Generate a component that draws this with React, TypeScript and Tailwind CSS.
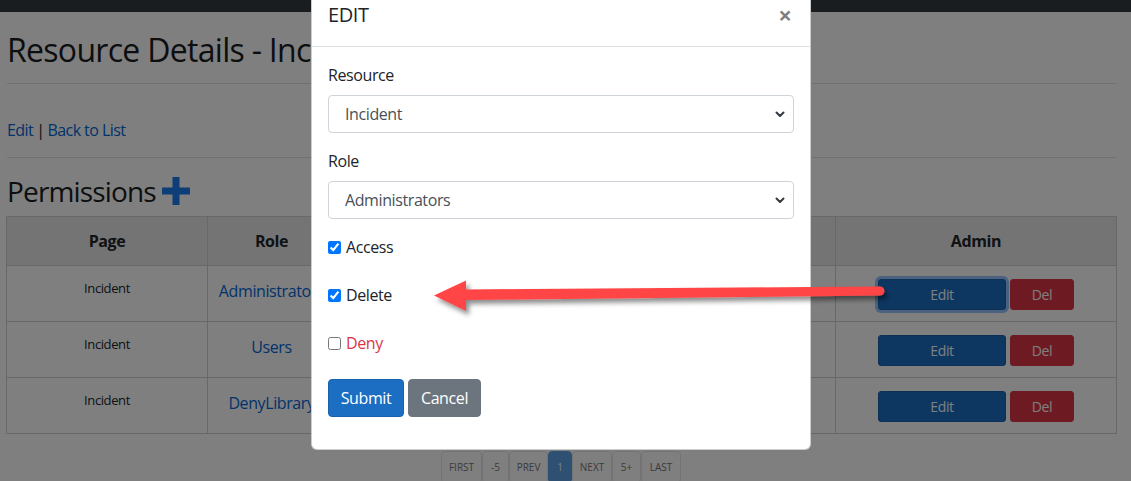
import React from "react";

function Chevron() {
  return (
    <svg
      className="absolute right-[9px] top-1/2 -translate-y-1/2"
      width="10"
      height="8"
      viewBox="0 0 10 8"
      fill="none"
    >
      <path d="M1.5 2.5 L5 6 L8.5 2.5" stroke="#343a40" strokeWidth="2" strokeLinecap="round" strokeLinejoin="round" />
    </svg>
  );
}

function Select({ value }: { value: string }) {
  return (
    <div className="relative">
      <select
        defaultValue={value}
        className="block w-full h-[38px] appearance-none border border-[#ced4da] rounded-[4px] bg-white pl-4 pr-8 text-[16px] text-[#495057] outline-none"
      >
        <option>{value}</option>
      </select>
      <Chevron />
    </div>
  );
}

function Check({ label, checked, red }: { label: string; checked?: boolean; red?: boolean }) {
  return (
    <div className="flex items-center h-[24px] mb-6">
      <input
        type="checkbox"
        defaultChecked={checked}
        className="m-0 w-[13px] h-[13px] accent-[#0075ff]"
      />
      <label className={"ml-[5px] text-[16px] leading-6 " + (red ? "text-[#dc3545]" : "text-[#212529]")}>{label}</label>
    </div>
  );
}

const rows = [
  { page: "Incident", role: "Administrators", focus: true },
  { page: "Incident", role: "Users", focus: false },
  { page: "Incident", role: "DenyLibrary", focus: false },
];

const pages = [
  { t: "FIRST", w: "w-[41px]" },
  { t: "-5", w: "w-[27px]" },
  { t: "PREV", w: "w-[39px]" },
  { t: "1", w: "w-[24px]", active: true },
  { t: "NEXT", w: "w-[40px]" },
  { t: "5+", w: "w-[29px]" },
  { t: "LAST", w: "w-[40px]" },
];

export default function App() {
  return (
    <div className="relative w-[1131px] h-[481px] overflow-hidden bg-white font-['Open_Sans',sans-serif] text-[#212529] tracking-[-0.025em]">
      {/* navbar strip */}
      <div className="h-[12px] bg-[#343a40]" />

      {/* page */}
      <div className="pl-[6px] pr-[15px]">
        <h1 className="mt-[19px] pl-[1px] text-[32px] leading-[1.2] font-normal tracking-[-0.022em] whitespace-nowrap text-[#1a1d21]">
          Resource Details - Incident
        </h1>
        <hr className="mt-[14px] ml-[1px] border-0 border-t border-[#e2e2e2]" />
        <div className="mt-[34px] pl-[1px] text-[16px] leading-6 tracking-[-0.035em]">
          <a className="text-[#0366d6]">Edit</a>
          <span className="mx-[3px]">|</span>
          <a className="text-[#0366d6]">Back to List</a>
        </div>
        <hr className="mt-[15px] ml-[1px] border-0 border-t border-[#e2e2e2]" />
        <div className="mt-[16px] pl-[1px] flex items-center h-[34px]">
          <h3 className="text-[28px] leading-[1.2] font-normal tracking-[-0.03em] text-[#1a1d21]">Permissions</h3>
          <svg className="ml-[6px]" width="28" height="28" viewBox="0 0 28 28">
            <rect x="10.5" y="0" width="7" height="28" fill="#1a7df0" />
            <rect x="0" y="10.5" width="28" height="7" fill="#1a7df0" />
          </svg>
        </div>

        <table className="mt-[8px] w-[1110px] table-fixed border-collapse text-center">
          <colgroup>
            <col className="w-[201px]" />
            <col className="w-[128px]" />
            <col className="w-[102px]" />
            <col className="w-[94px]" />
            <col className="w-[304px]" />
            <col className="w-[281px]" />
          </colgroup>
          <thead>
            <tr className="bg-[#e8e9eb]">
              {["Page", "Role", "Access", "Delete", "Deny", "Admin"].map((h) => (
                <th key={h} className="border border-[#d0d0d0] py-3 text-[16px] leading-6 font-bold">
                  {h}
                </th>
              ))}
            </tr>
          </thead>
          <tbody>
            {rows.map((r) => (
              <tr key={r.role}>
                <td className="border border-[#d0d0d0] pt-[13px] pb-3 align-top text-[13px] leading-[19px]">{r.page}</td>
                <td className="border border-[#d0d0d0] pt-[13px] pb-3 align-top text-[16px] leading-6 whitespace-nowrap overflow-visible">
                  <a className="text-[#0366d6]">{r.role}</a>
                </td>
                <td className="border border-[#d0d0d0] py-3 align-top text-[14px]">True</td>
                <td className="border border-[#d0d0d0] py-3 align-top text-[14px]">True</td>
                <td className="border border-[#d0d0d0] py-3 align-top text-[14px]">False</td>
                <td className="border border-[#d0d0d0] pt-[13px] pb-[11px] align-top">
                  <div className="flex justify-center gap-[4px]">
                    <button
                      className={
                        "w-[128px] h-[31px] rounded-[3px] border border-[#1861ac] bg-[#1b6ec2] text-[14px] text-white " +
                        (r.focus ? "shadow-[0_0_0_3px_rgba(60,150,255,0.55)]" : "")
                      }
                    >
                      Edit
                    </button>
                    <button className="w-[64px] h-[31px] rounded-[3px] border border-[#dc3545] bg-[#dc3545] text-[14px] text-white">
                      Del
                    </button>
                  </div>
                </td>
              </tr>
            ))}
          </tbody>
        </table>

        <div className="mt-[17px] flex justify-center">
          <div className="flex">
            {pages.map((p) => (
              <div
                key={p.t}
                className={
                  p.w +
                  " h-[32px] flex items-center justify-center rounded-[4px] border text-[10px] tracking-normal " +
                  (p.active
                    ? "bg-[#5aa0e6] border-[#5aa0e6] text-white"
                    : "bg-white border-[#e6e6e6] text-[#777]")
                }
              >
                {p.t}
              </div>
            ))}
          </div>
        </div>
      </div>

      {/* backdrop */}
      <div className="absolute inset-0 bg-black/50" />

      {/* modal */}
      <div className="absolute left-[311px] top-[-17px] w-[500px] bg-white rounded-[6px] border border-black/20">
        <div className="flex items-start justify-between p-4 border-b border-[#dee2e6]">
          <h5 className="text-[20px] leading-[30px] font-medium text-[#212529]">EDIT</h5>
          <button className="mr-[1px] h-[30px] w-[16px] flex items-center justify-center text-[24px] leading-none font-bold text-black/50">
            ×
          </button>
        </div>
        <div className="p-4 pb-8">
          <div className="mb-4">
            <label className="block mb-2 text-[16px] leading-6">Resource</label>
            <Select value="Incident" />
          </div>
          <div className="mb-4">
            <label className="block mb-2 text-[16px] leading-6">Role</label>
            <Select value="Administrators" />
          </div>
          <Check label="Access" checked />
          <Check label="Delete" checked />
          <Check label="Deny" red />
          <div className="flex gap-[4px]">
            <button className="h-[38px] w-[76px] rounded-[4px] border border-[#1861ac] bg-[#1b6ec2] text-[16px] text-white">
              Submit
            </button>
            <button className="h-[38px] w-[73px] rounded-[4px] border border-[#6c757d] bg-[#6c757d] text-[16px] text-white">
              Cancel
            </button>
          </div>
        </div>
      </div>

      {/* annotation arrow */}
      <svg className="absolute left-0 top-0 pointer-events-none" width="1131" height="481" viewBox="0 0 1131 481">
        <defs>
          <filter id="sh" x="-10%" y="-50%" width="120%" height="200%">
            <feDropShadow dx="3" dy="4" stdDeviation="2.5" floodColor="#000" floodOpacity="0.45" />
          </filter>
        </defs>
        <g filter="url(#sh)" fill="#ff4545">
          <polygon points="463,289.5 880,286.5 880,295.5 463,300" />
          <circle cx="880" cy="291" r="4.5" />
          <polygon points="434,295.5 466,280.5 466,311" />
        </g>
      </svg>
    </div>
  );
}
